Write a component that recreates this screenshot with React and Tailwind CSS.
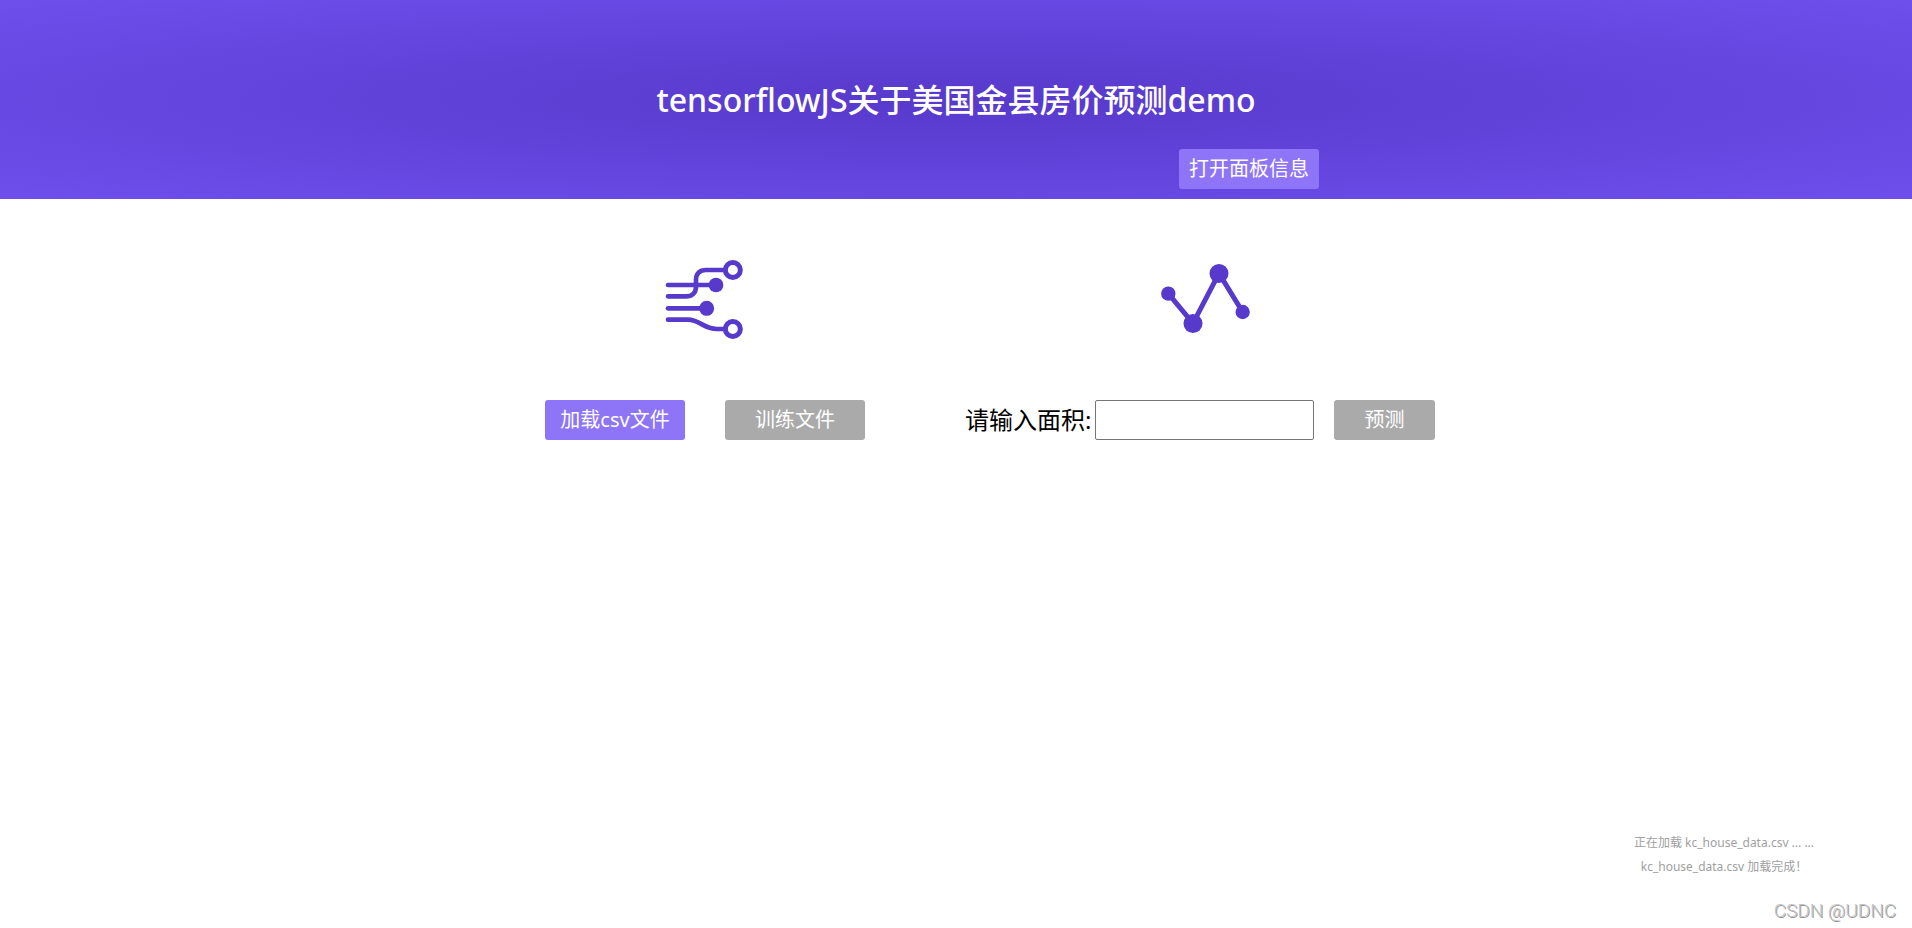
const buttonBase = "h-10 rounded-[3px] text-center text-xl text-white";

function CircuitIcon() {
  return (
    <svg className="h-[110px] w-[110px]" viewBox="0 0 330 330" fill="none" stroke="#5739cb" aria-hidden="true">
      <g strokeWidth="14" strokeLinecap="round">
        <path d="M54 135H198" />
        <path d="M54 169H108C126 169 138 158 138 140V120C138 101 149 90 168 90H226" />
        <path d="M54 205H170" />
        <path d="M54 239H114C148 239 162 267 200 267H226" />
      </g>
      <circle cx="198" cy="135" r="22" fill="#5739cb" stroke="none" />
      <circle cx="170" cy="205" r="22.5" fill="#5739cb" stroke="none" />
      <circle cx="248.500" cy="90" r="22.5" fill="#fff" strokeWidth="15" />
      <circle cx="248.500" cy="267" r="22.5" fill="#fff" strokeWidth="15" />
    </svg>
  );
}

function TrendIcon() {
  return (
    <svg className="h-[110px] w-[130px]" viewBox="-15 0 390 330" fill="#5739cb" aria-hidden="true">
      <path d="M85 161L159 250L237 100L308 216" fill="none" stroke="#5739cb" strokeWidth="15" />
      <circle cx="85" cy="161" r="21.5" />
      <circle cx="159" cy="250.500" r="28.500" />
      <circle cx="237" cy="100.500" r="28.500" />
      <circle cx="308" cy="216" r="21.5" />
    </svg>
  );
}

export default function App() {
  return (
    <div className="flex min-h-screen flex-col bg-white font-['Noto_Sans','Noto_Sans_CJK_SC',sans-serif] text-black">
      <header className="flex flex-col items-center bg-[radial-gradient(#5739cb,#6e4fec)] pt-[76px] pb-[10px]">
        <h1 className="text-[32px] leading-[48px] font-medium text-white">tensorflowJS关于美国金县房价预测demo</h1>
        <div className="mt-[25px] flex w-[726px] justify-end">
          <button type="button" className={`${buttonBase} w-[140px] bg-[#8e74f6]`}>打开面板信息</button>
        </div>
      </header>

      <main className="flex justify-center gap-[100px] pt-[41px] pl-[68px]">
        <section className="flex flex-col items-center gap-[50px]">
          <CircuitIcon />
          <div className="flex gap-10">
            <button type="button" className={`${buttonBase} w-[140px] bg-[#8e74f6]`}>加载csv文件</button>
            <button type="button" className={`${buttonBase} w-[140px] bg-[#aaaaaa]`}>训练文件</button>
          </div>
        </section>
        <section className="flex flex-col items-center gap-[50px]">
          <TrendIcon />
          <div className="flex items-center">
            <label htmlFor="area" className="w-[130px] text-2xl whitespace-nowrap">请输入面积:</label>
            <input id="area" type="text" className="h-10 w-[219px] rounded-[2px] border border-[#767676] bg-white px-2 text-xl" />
            <button type="button" className={`${buttonBase} ml-5 w-[101px] bg-[#aaaaaa]`}>预测</button>
          </div>
        </section>
      </main>

      <footer className="mt-auto flex flex-col items-end">
        <div className="mr-[88px] flex w-[200px] flex-col text-center text-xs leading-6 text-[#a0a0a0]">
          <p>正在加载 kc_house_data.csv ... ...</p>
          <p>kc_house_data.csv 加载完成！</p>
        </div>
        <p className="mt-[18px] mr-4 mb-[3px] font-[Roboto,sans-serif] text-[19px] leading-7 font-light text-[#c4c4c4] [text-shadow:1px_1px_0_#969696]">CSDN @UDNC</p>
      </footer>
    </div>
  );
}
